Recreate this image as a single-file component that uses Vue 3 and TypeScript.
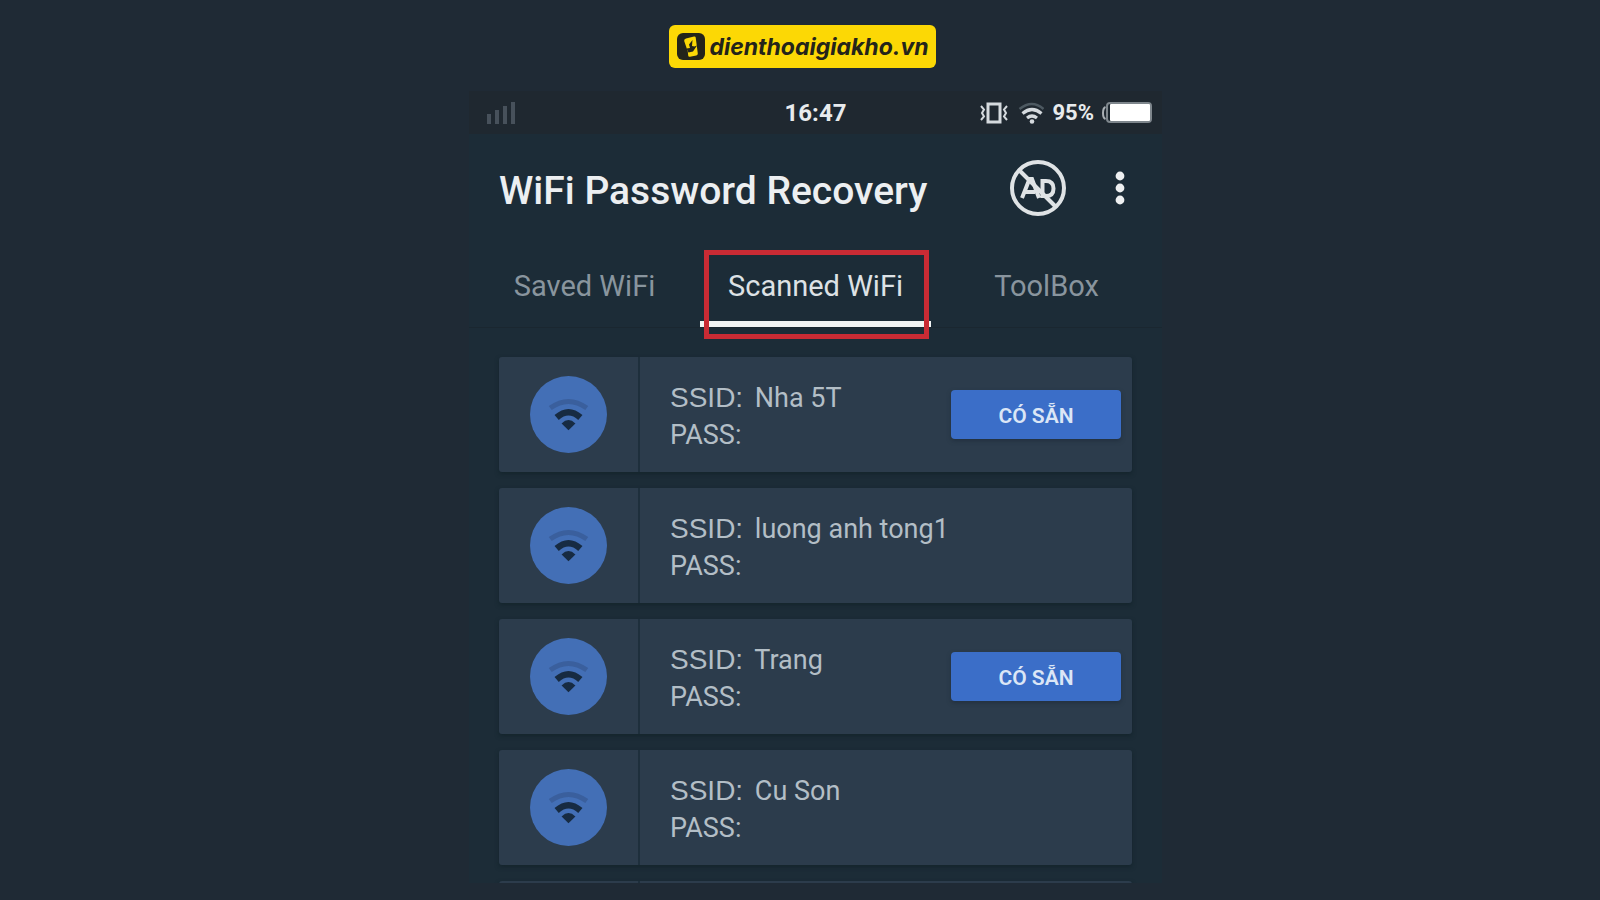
<script setup lang="ts">
import { ref } from 'vue'

interface Network {
  ssid: string
  available: boolean
}

const tabs: string[] = ['Saved WiFi', 'Scanned WiFi', 'ToolBox']
const active = ref(1)

const networks: Network[] = [
  { ssid: 'Nha 5T', available: true },
  { ssid: 'luong anh tong1', available: false },
  { ssid: 'Trang', available: true },
  { ssid: 'Cu Son', available: false },
]
</script>

<template>
  <div class="page">
    <header class="brand-row">
      <a class="brand" href="#">
        <svg class="brand-mark" viewBox="0 0 28 27" aria-hidden="true">
          <rect width="28" height="27" rx="6" fill="#24241a" />
          <path d="M9 5.500 L17 3.500 Q18.500 3.200 18.700 4.600 L20.800 20.500 Q20.900 22 19.300 22.400 L13 23.800 Q11.300 24.100 11.200 22.500 L10.800 18.500 L7.200 8 Q6.800 6.200 9 5.500Z" fill="#fcd805" />
          <path d="M15.500 7 L12 11.500 L13 15 L9.500 15.500 L11.500 19.500 L16 18.500 L20 12.500 L17.500 13.500 L15 13Z" fill="#24241a" />
        </svg>
        <span>dienthoaigiakho.vn</span>
      </a>
    </header>

    <main class="phone">
      <div class="status">
        <svg class="signal" viewBox="0 0 28 22" aria-hidden="true">
          <path d="M0 12h4v10H0zM8 8h4v14H8zM16 4h4v18h-4zM24 0h4v22h-4z" fill="#47515b" />
        </svg>
        <time class="clock">16:47</time>
        <div class="status-right">
          <svg class="vibrate" viewBox="0 0 28 22" aria-hidden="true">
            <rect x="8" y="2" width="12" height="18" fill="none" stroke="#d5dade" stroke-width="3" />
            <path d="M1 4l3 3.500-2 3.500 2 3.500-3 3.500M27 4l-3 3.500 2 3.500-2 3.500 3 3.500" fill="none" stroke="#d5dade" stroke-width="2" />
          </svg>
          <svg class="wifi-status" viewBox="0 0 28 22" aria-hidden="true">
            <path d="M3.500 7Q16-3 27.500 7" fill="none" stroke="#4d5961" stroke-width="2.500" />
            <path d="M6.500 11.500Q16 3.500 25.500 11.500M11 16Q16 12 21 16" fill="none" stroke="#d5dade" stroke-width="3.200" />
            <circle cx="16" cy="19.500" r="2.300" fill="#d5dade" />
          </svg>
          <span class="percent">95%</span>
          <svg class="battery" viewBox="0 0 50 22" aria-hidden="true">
            <path d="M3.500 5Q1 6 1 11T3.500 17" fill="none" stroke="#aab0b5" stroke-width="2" />
            <rect x="5" y="1" width="44" height="19" rx="3" fill="#1c262e" stroke="#7e868c" stroke-width="2" />
            <rect x="8" y="2" width="40" height="17" rx="1" fill="#fff" />
          </svg>
        </div>
      </div>

      <div class="title-bar">
        <h1>WiFi Password Recovery</h1>
        <button class="icon-button" type="button" aria-label="Remove ads">
          <svg class="no-ads" viewBox="0 0 58 58" aria-hidden="true">
            <circle cx="29" cy="29" r="26" fill="none" stroke="#dfe3e5" stroke-width="4" />
            <path d="M13 39L20.500 20h2.500l7 19M16 33h10M33.500 22v15h3.500q7.500 0 7.500-7.500t-7.500-7.500z" fill="none" stroke="#dfe3e5" stroke-width="4" />
            <path d="M10 11L47 48" stroke="#dfe3e5" stroke-width="4" />
          </svg>
        </button>
        <button class="icon-button" type="button" aria-label="More options">
          <svg class="dots" viewBox="0 0 10 34" aria-hidden="true">
            <circle cx="5" cy="5" r="4.400" fill="#eef0f1" />
            <circle cx="5" cy="17" r="4.400" fill="#eef0f1" />
            <circle cx="5" cy="29" r="4.400" fill="#eef0f1" />
          </svg>
        </button>
      </div>

      <div class="tabs" role="tablist">
        <button
          v-for="(tab, i) in tabs"
          :key="tab"
          type="button"
          role="tab"
          class="tab"
          :class="{ active: i === active }"
          :aria-selected="i === active"
          @click="active = i"
        >
          {{ tab }}
        </button>
      </div>

      <ul class="list">
        <li v-for="n in networks" :key="n.ssid" class="card">
          <div class="badge-cell">
            <svg class="badge" viewBox="0 0 78 78" aria-hidden="true">
              <circle cx="39" cy="39" r="39" fill="#436fb6" />
              <path d="M20.500 32.500Q39 19 57.500 32.500" fill="none" stroke="#3a5f9d" stroke-width="5" />
              <path d="M27 42Q39 31.500 51 42" fill="none" stroke="#172b42" stroke-width="6.500" />
              <path d="M32 48Q39 41 46 48L39 55Z" fill="#172b42" />
            </svg>
          </div>
          <div class="info">
            <p><span class="label">SSID:</span> {{ n.ssid }}</p>
            <p>PASS:</p>
          </div>
          <button v-if="n.available" class="action" type="button">CÓ SẴN</button>
        </li>
        <li class="card" aria-hidden="true"><div class="badge-cell"></div></li>
      </ul>
    </main>
  </div>
</template>

<style>
body {
  margin: 0;
  background: #1f2a35;
}
</style>

<style scoped>
.page {
  box-sizing: border-box;
  height: 100vh;
  min-height: 600px;
  padding: 25px 0 17px;
  display: flex;
  flex-direction: column;
  align-items: center;
  gap: 23px;
  overflow: hidden;
  font-family: Roboto, "Noto Sans", sans-serif;
}
.brand-row {
  padding-left: 5px;
}
.brand {
  box-sizing: border-box;
  height: 43px;
  padding: 0 7px 0 8px;
  display: flex;
  align-items: center;
  gap: 4px;
  border-radius: 6px;
  background: #fcd805;
  color: #24241a;
  font-family: Inter, Roboto, sans-serif;
  font-size: 23px;
  font-weight: 700;
  font-style: italic;
  text-decoration: none;
}
.brand-mark {
  width: 28px;
  height: 27px;
}
.phone {
  box-sizing: border-box;
  width: 100%;
  max-width: 693px;
  min-height: 0;
  flex: 1;
  margin-left: 31px;
  overflow: hidden;
  background: #1c2c37;
}
.status {
  height: 43px;
  padding: 0 10px 0 18px;
  display: grid;
  grid-template-columns: 1fr auto 1fr;
  align-items: center;
  background: #1f2830;
  color: #e8ebed;
  font-size: 24px;
  font-weight: 700;
}
.signal {
  width: 28px;
  height: 22px;
}
.clock {
  padding-right: 8px;
}
.status-right {
  display: flex;
  align-items: center;
  justify-content: flex-end;
  gap: 8px;
}
.vibrate,
.wifi-status {
  width: 28px;
  height: 22px;
}
.percent {
  font-size: 22px;
}
.battery {
  width: 50px;
  height: 22px;
}
.title-bar {
  height: 108px;
  padding: 0 37px 0 30px;
  display: flex;
  align-items: center;
  color: #eceff1;
}
h1 {
  flex: 1;
  margin: 0;
  padding-top: 6px;
  font-size: 39px;
  font-weight: 500;
}
.icon-button {
  padding: 0;
  border: 0;
  background: none;
  display: flex;
}
.icon-button + .icon-button {
  margin-left: 48px;
}
.no-ads {
  width: 58px;
  height: 58px;
}
.dots {
  width: 10px;
  height: 34px;
}
.tabs {
  height: 85px;
  display: grid;
  grid-template-columns: repeat(3, 1fr);
  border-bottom: 1px solid #1a2730;
}
.tab {
  position: relative;
  border: 0;
  padding: 2px 0 0;
  background: none;
  color: #89959e;
  font-family: inherit;
  font-size: 29px;
}
.tab.active {
  color: #dde2e5;
  box-shadow: inset 0 -6px #f2f4f4;
}
.tab.active::after {
  content: "";
  position: absolute;
  inset: 8px 2px -12px 4px;
  border: 5px solid #c92b34;
}
.list {
  list-style: none;
  margin: 0;
  padding: 29px 30px 0;
  display: grid;
  gap: 16px;
}
.card {
  height: 115px;
  display: flex;
  align-items: center;
  border-radius: 3px;
  background: #2c3c4c;
  box-shadow: 0 2px 4px #14242c;
}
.badge-cell {
  box-sizing: border-box;
  width: 141px;
  height: 100%;
  display: flex;
  align-items: center;
  justify-content: center;
  border-right: 2px solid #1e2f3c;
}
.badge {
  width: 77px;
  height: 77px;
}
.info {
  flex: 1;
  padding: 4px 0 0 30px;
  color: #b3bec6;
  font-size: 27px;
  line-height: 37px;
}
.info p {
  margin: 0;
}
.label {
  margin-right: 5px;
  font-family: "Liberation Sans", Arial, sans-serif;
  font-size: 28px;
}
.action {
  width: 170px;
  height: 49px;
  margin-right: 11px;
  padding: 2px 0 0;
  border: 0;
  border-radius: 4px;
  background: #3b6ec8;
  box-shadow: 0 2px 4px #22303f;
  color: #dbe6f6;
  font-family: inherit;
  font-size: 21px;
  font-weight: 600;
}
</style>
